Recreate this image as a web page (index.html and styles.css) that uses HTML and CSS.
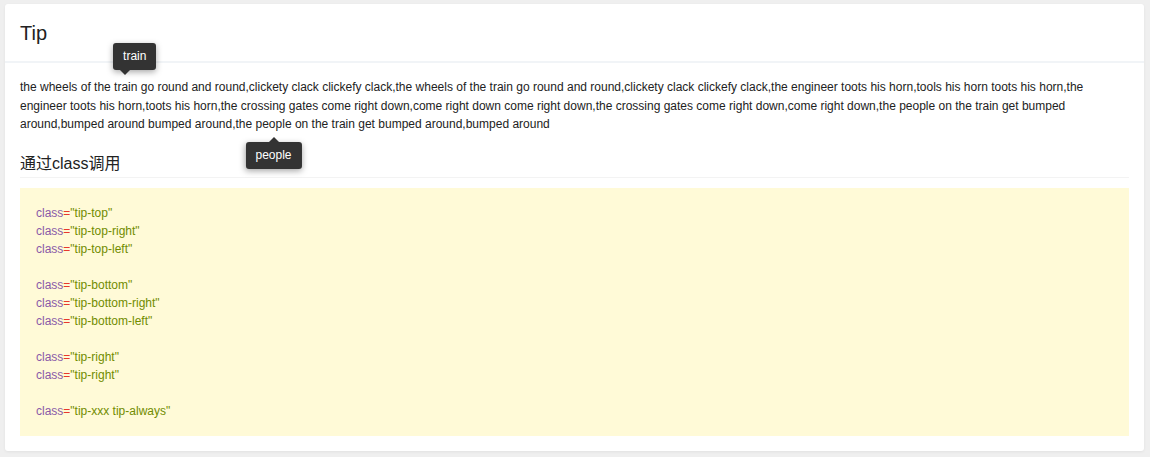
FILE: index.html
```html
<!DOCTYPE html>
<html>
<head>
<meta charset="utf-8">
<link rel="stylesheet" href="styles.css">
</head>
<body>
<div class="card">
  <div class="card-header">Tip</div>
  <div class="card-body">
    <p class="lyrics">the wheels of the <span class="tip-word">train<span class="tip tip-top-left">train</span></span> go round and round,clickety clack clickefy clack,the wheels of the train go round and round,clickety clack clickefy clack,the engineer toots his horn,tools his horn toots his horn,the engineer toots his horn,toots his horn,the crossing gates come right down,come right down come right down,the crossing gates come right down,come right down,the people on the train get bumped around,bumped around bumped around,the <span class="tip-word">people<span class="tip tip-bottom">people</span></span> on the train get bumped around,bumped around</p>
    <h3 class="section-title">通过class调用</h3>
    <div class="code">
      <div class="line"><span class="k">class</span><span class="o">=</span><span class="s">"tip-top"</span></div>
      <div class="line"><span class="k">class</span><span class="o">=</span><span class="s">"tip-top-right"</span></div>
      <div class="line"><span class="k">class</span><span class="o">=</span><span class="s">"tip-top-left"</span></div>
      <div class="line blank"></div>
      <div class="line"><span class="k">class</span><span class="o">=</span><span class="s">"tip-bottom"</span></div>
      <div class="line"><span class="k">class</span><span class="o">=</span><span class="s">"tip-bottom-right"</span></div>
      <div class="line"><span class="k">class</span><span class="o">=</span><span class="s">"tip-bottom-left"</span></div>
      <div class="line blank"></div>
      <div class="line"><span class="k">class</span><span class="o">=</span><span class="s">"tip-right"</span></div>
      <div class="line"><span class="k">class</span><span class="o">=</span><span class="s">"tip-right"</span></div>
      <div class="line blank"></div>
      <div class="line"><span class="k">class</span><span class="o">=</span><span class="s">"tip-xxx tip-always"</span></div>
    </div>
  </div>
</div>
</body>
</html>
```

FILE: styles.css
```css
html, body {
  margin: 0;
  padding: 0;
}
body {
  background: #efefef;
  font-family: "Liberation Sans", Arial, "Noto Sans CJK SC", sans-serif;
  color: #333;
  padding: 4px 6px 6px 5px;
}
.card {
  background: #fff;
  border-radius: 3px;
  box-shadow: 0 1px 3px rgba(0, 0, 0, 0.06);
}
.card-header {
  height: 57px;
  line-height: 58px;
  padding: 0 15px;
  font-size: 20px;
  color: #222;
  border-bottom: 2px solid #f1f4f7;
}
.card-body {
  padding: 15px 15px 15px 15px;
}
.lyrics {
  margin: 0;
  font-size: 12px;
  line-height: 18.5px;
  color: #222;
}
.tip-word {
  position: relative;
}
.tip {
  position: absolute;
  background: #333;
  color: #fff;
  font-size: 12px;
  line-height: 27px;
  height: 27px;
  padding: 0 10px;
  border-radius: 3px;
  white-space: nowrap;
  box-shadow: 0 2px 6px rgba(0, 0, 0, 0.35);
}
.tip::after {
  content: "";
  position: absolute;
  border: 5px solid transparent;
}
.tip-top-left {
  left: -1px;
  bottom: calc(100% + 10px);
}
.tip-top-left::after {
  top: 100%;
  left: 7px;
  border-top-color: #333;
}
.tip-bottom {
  left: 50%;
  transform: translateX(-50%);
  top: calc(100% + 11px);
}
.tip-bottom::after {
  bottom: 100%;
  left: 50%;
  margin-left: -5px;
  border-bottom-color: #333;
}
.section-title {
  margin: 19px 0 10px;
  padding-bottom: 2px;
  font-size: 16px;
  font-weight: normal;
  line-height: 22px;
  color: #222;
  border-bottom: 1px solid #f3f3f3;
}
.code {
  background: #fffad7;
  padding: 16px 16px;
  font-size: 12px;
  line-height: 18px;
}
.line {
  height: 18px;
}
.k { color: #8959a8; }
.o { color: #e8392c; }
.s { color: #718c00; }
```
